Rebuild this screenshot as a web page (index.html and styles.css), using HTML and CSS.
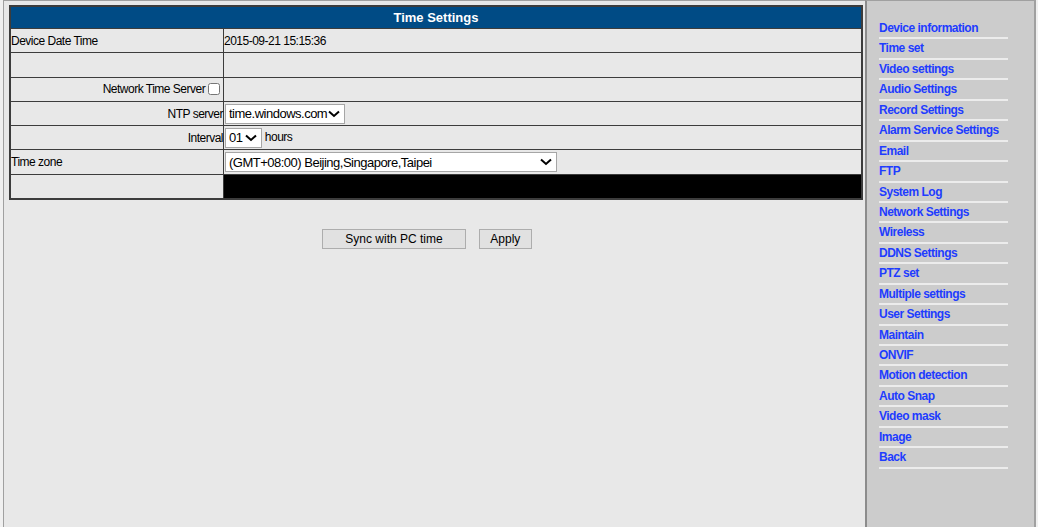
FILE: index.html
```html
<!DOCTYPE html>
<html>
<head>
	<title>Time Settings</title>
	<link rel="stylesheet" href="styles.css">
</head>
<body>
	<div class="frames">
		<div class="main">
			<table class="settings">
				<tr><th colspan="2">Time Settings</th></tr>
				<tr>
					<td class="label">Device Date Time</td>
					<td>2015-09-21 15:15:36</td>
				</tr>
				<tr><td class="label"></td><td></td></tr>
				<tr>
					<td class="label right">Network Time Server <input type="checkbox" class="check"></td>
					<td></td>
				</tr>
				<tr>
					<td class="label right">NTP server</td>
					<td>
						<select class="ntp">
							<option>time.windows.com</option>
							<option>time.nist.gov</option>
							<option>pool.ntp.org</option>
						</select>
					</td>
				</tr>
				<tr>
					<td class="label right">Interval</td>
					<td>
						<select class="interval"><option>01</option><option>02</option><option>12</option></select>
						hours
					</td>
				</tr>
				<tr>
					<td class="label">Time zone</td>
					<td>
						<select class="zone">
							<option>(GMT+08:00) Beijing,Singapore,Taipei</option>
						</select>
					</td>
				</tr>
				<tr><td class="label"></td><td class="black"></td></tr>
			</table>
			<div class="buttons">
				<button class="btn sync">Sync with PC time</button>
				<button class="btn apply">Apply</button>
			</div>
		</div>
		<div class="menu">
			<a href="#">Device information</a>
			<a href="#">Time set</a>
			<a href="#">Video settings</a>
			<a href="#">Audio Settings</a>
			<a href="#">Record Settings</a>
			<a href="#">Alarm Service Settings</a>
			<a href="#">Email</a>
			<a href="#">FTP</a>
			<a href="#">System Log</a>
			<a href="#">Network Settings</a>
			<a href="#">Wireless</a>
			<a href="#">DDNS Settings</a>
			<a href="#">PTZ set</a>
			<a href="#">Multiple settings</a>
			<a href="#">User Settings</a>
			<a href="#">Maintain</a>
			<a href="#">ONVIF</a>
			<a href="#">Motion detection</a>
			<a href="#">Auto Snap</a>
			<a href="#">Video mask</a>
			<a href="#">Image</a>
			<a href="#">Back</a>
		</div>
	</div>
</body>
</html>
```
FILE: styles.css
```css
html, body { margin: 0; padding: 0; }
body { background: #f0f0f0; font-family: "Liberation Sans", Arial, sans-serif; font-size: 12px; letter-spacing: -0.5px; color: #000; }

.frames { display: flex; height: 527px; padding-left: 3px; box-sizing: border-box; }
.main { width: 862px; background: #e8e8e8; border-left: 1px solid #a0a0a0; border-top: 1px solid #a0a0a0; padding: 4px 0 0 5px; box-sizing: border-box; }
.menu { width: 171px; background: #cccccc; border-left: 2px solid #8c8c8c; border-top: 1px solid #a0a0a0; border-right: 2px solid #a0a0a0; padding: 18px 0 0 12px; box-sizing: border-box; }

/* table */
.settings { width: 854px; border-collapse: collapse; border: 2px solid #3c3c3c; }
.settings th { background: #004b85; color: #fff; font-size: 13px; font-weight: bold; letter-spacing: 0; height: 21px; padding: 0; border: 1px solid #3c3c3c; }
.settings td { height: 23.3px; padding: 0; border: 1px solid #3c3c3c; white-space: nowrap; }
.settings td.label { width: 212px; }
.settings td.right { text-align: right; }
.settings td.black { background: #000; }
.check { width: 12px; height: 12px; margin: 0 3px 0 0; vertical-align: -2px; }

select {
	-webkit-appearance: none; appearance: none;
	font-family: "Liberation Sans", Arial, sans-serif; font-size: 13px; letter-spacing: -0.5px;
	height: 20px; border: 1px solid #a6a6a6; border-radius: 0; padding: 0 16px 0 3px; margin: 0 0 0 1px; vertical-align: middle;
	background: #fff url("data:image/svg+xml;utf8,<svg xmlns='http://www.w3.org/2000/svg' width='12' height='8'><path d='M1 1.5 L6 6 L11 1.5' fill='none' stroke='%23000' stroke-width='2'/></svg>") no-repeat right 4px center;
}
.ntp { width: 120px; }
.interval { width: 37px; }
.zone { width: 332px; }

/* buttons */
.buttons { padding: 29px 0 0 313px; }
.btn { font-family: "Liberation Sans", Arial, sans-serif; font-size: 12px; letter-spacing: 0; height: 20px; background: #e1e1e1; border: 1px solid #adadad; padding: 0; margin: 0; }
.sync { width: 144px; }
.apply { width: 53px; margin-left: 10px; }

/* menu */
.menu a { display: block; width: 129px; line-height: 18.43px; border-bottom: 2px solid #ececec; color: #1e3cff; font-weight: bold; text-decoration: none; white-space: nowrap; }
```
